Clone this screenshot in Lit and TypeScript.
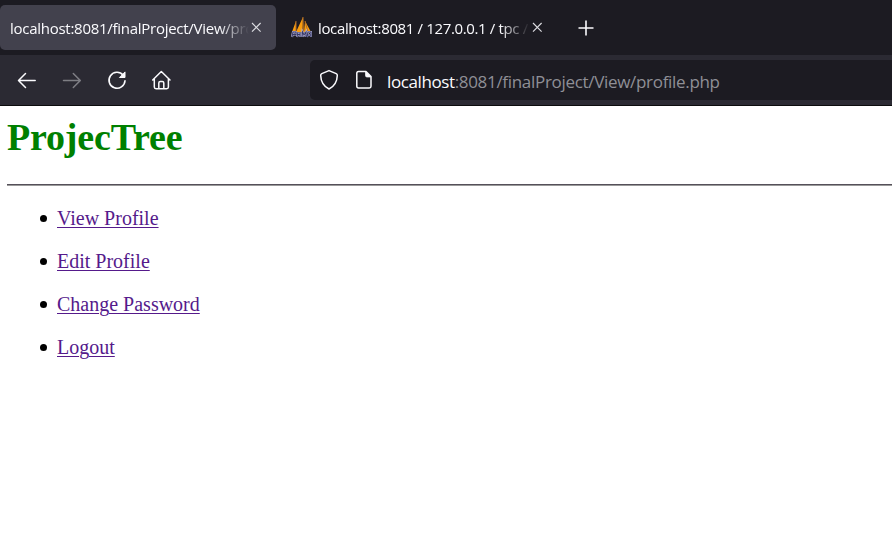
import { LitElement, html, css, svg } from "lit";
import { customElement } from "lit/decorators.js";

const LINKS = ["View Profile", "Edit Profile", "Change Password", "Logout"];

const closeIcon = svg`<path d="M1 1l8.600 8.600M9.600 1L1 9.600" fill="none" stroke="currentColor" stroke-width="1.15"/>`;

@customElement("app-root")
export class AppRoot extends LitElement {
  static styles = css`
    :host { display: flex; flex-direction: column; width: 100%; height: 100vh; overflow: hidden; background: #fff; }
    svg { display: block; flex: none; }
    .tabs { flex: none; height: 55px; box-sizing: border-box; padding: 5px 0; display: flex; background: #1c1b22; color: #fbfbfe;
      font: 15px/20px "Open Sans", "Noto Sans", sans-serif; }
    .tab { height: 45px; width: 276px; box-sizing: border-box; padding: 0 14px 0 10px; display: flex; align-items: center; border-radius: 5px; }
    .tab.active { background: #42414d; }
    .tab.second { margin-left: 5px; }
    .title { flex: 1; min-width: 0; overflow: hidden; white-space: nowrap; letter-spacing: -0.27px; padding-top: 1px;
      -webkit-mask-image: linear-gradient(to left, transparent, #000 30px); mask-image: linear-gradient(to left, transparent, #000 30px); }
    .second .title { letter-spacing: -0.36px; }
    .favicon { margin-right: 6px; }
    .close { color: #dcdce1; margin-left: 2px; }
    .plus { margin: 15px 0 0 21px; }
    .toolbar { flex: none; height: 51px; box-sizing: border-box; display: flex; align-items: center; background: #2b2a33; border-bottom: 1px solid #0c0c0d; color: #fbfbfe; }
    .nav { width: 310px; box-sizing: border-box; padding-left: 16px; display: flex; gap: 23px; }
    .dim { opacity: .4; }
    .url { flex: 1; height: 40px; border-radius: 5px 0 0 5px; background: #1c1b22; box-sizing: border-box; padding-left: 8px; display: flex; align-items: center; }
    .doc { margin-left: 13px; }
    .address { margin-left: 12px; padding-top: 4px; color: #8f8f96; white-space: nowrap; font: 17px/24px "Open Sans", "Noto Sans", sans-serif; letter-spacing: -0.31px; }
    .address b { font-weight: 400; color: #fbfbfe; letter-spacing: -0.4px; }
    .page { flex: 1; padding-left: 7px; font: 20px/23px "Liberation Serif", "Times New Roman", serif; color: #000; }
    h1 { margin: 9px 0 0; color: #008000; font-size: 38px; line-height: 44px; font-weight: 700; letter-spacing: -0.18px; }
    .rule { height: 1px; background: #55505a; border-bottom: 1px solid #9a9a9a; margin-top: 25px; }
    ul { margin: 21px 0 0; padding: 0 0 0 50px; list-style: none; }
    li { display: flex; align-items: center; height: 23px; margin-bottom: 20px; }
    .dot { width: 7px; height: 7px; border-radius: 50%; background: #000; margin: 0 10px 0 -17px; }
    a { color: #551a8b; text-decoration: underline; text-decoration-thickness: 1px; text-underline-offset: 2px; }
  `;

  render() {
    return html`
      <div class="tabs">
        <div class="tab active">
          <span class="title">localhost:8081/finalProject/View/profile.php</span>
          <svg class="close" width="11" height="11">${closeIcon}</svg>
        </div>
        <div class="tab second">
          <svg class="favicon" width="21" height="21" viewBox="0 0 21 21">
            <path d="M5 4L1 15h4zM12 0L5 15h6.500zM14 4L20 15h-7z" fill="#f89c0e"/>
            <path d="M5 4v11M12 0l.5 15M14 4l3 11" stroke="#ad6b28" fill="none"/>
            <path d="M1 20l1-5h3v2.500H2M6 20l1-5M6 17.500h3M9 15v5M11 20l.5-5 1.500 3 2-3v5M16 20l1-5h3v5M16 18h4" stroke="#b7b7d8" stroke-width="2.200" fill="none"/>
            <path d="M1 20l1-5h3v2.500H2M6 20l1-5M6 17.500h3M9 15v5M11 20l.5-5 1.500 3 2-3v5M16 20l1-5h3v5M16 18h4" stroke="#383968" stroke-width="1.1" fill="none"/>
          </svg>
          <span class="title">localhost:8081 / 127.0.0.1 / tpc / users</span>
          <svg class="close" width="11" height="11">${closeIcon}</svg>
        </div>
        <svg class="plus" width="16" height="16"><path d="M8 .5v15M.5 8h15" stroke="#fbfbfe" stroke-width="1.600"/></svg>
      </div>
      <div class="toolbar">
        <div class="nav">
          <svg width="22" height="22" fill="none" stroke="currentColor" stroke-width="1.5" stroke-linecap="round" stroke-linejoin="round"><path d="M19.200 11.500H3M9.500 4.500l-7 7 7 7"/></svg>
          <svg class="dim" width="22" height="22" fill="none" stroke="currentColor" stroke-width="1.5" stroke-linecap="round" stroke-linejoin="round"><path d="M2.500 11.500h16M12.300 4.500l7 7-7 7"/></svg>
          <svg width="22" height="22" fill="none" stroke="currentColor" stroke-width="1.6" stroke-linecap="round"><path d="M17.200 6.200A8 8 0 1 0 19 11.800"/><path d="M19 3.300v5.200h-5.200z" fill="currentColor" stroke-width="1" stroke-linejoin="round"/></svg>
          <svg width="22" height="22" fill="none" stroke="currentColor" stroke-width="1.5" stroke-linecap="round" stroke-linejoin="round"><path d="M1.700 11l8.600-8.500L19 11M3.300 9.800v8.200q0 1.700 1.700 1.700h10.700q1.700 0 1.700-1.700V9.800M7.800 19.500V14q0-1.500 1.500-1.500h2q1.500 0 1.500 1.500v5.500"/></svg>
        </div>
        <div class="url">
          <svg width="22" height="22" viewBox="0 0 22 22" fill="none" stroke="currentColor" stroke-width="1.5" stroke-linejoin="round"><path d="M11 1.600l7.200 3q1.200.5 1.100 1.900c-.2 6-2.300 10.500-8.300 13.500-6-3-8.100-7.500-8.300-13.500q-.1-1.400 1.100-1.900z"/></svg>
          <svg class="doc" width="22" height="22" viewBox="0 0 22 22" fill="none" stroke="currentColor" stroke-width="1.500" stroke-linejoin="round"><path d="M5.500 2.500h7.500l5 5v9.800q0 1.700-1.700 1.700H5.500q-1.700 0-1.700-1.700V4.200q0-1.700 1.700-1.700z"/><path d="M12.500 2.500l5.500 5.500h-4q-1.500 0-1.500-1.500z" fill="currentColor" stroke-width=".7"/></svg>
          <span class="address"><b>localhost</b>:8081/finalProject/View/profile.php</span>
        </div>
      </div>
      <div class="page">
        <h1>ProjecTree</h1>
        <div class="rule"></div>
        <ul>${LINKS.map((t) => html`<li><span class="dot"></span><a>${t}</a></li>`)}</ul>
      </div>
    `;
  }
}
